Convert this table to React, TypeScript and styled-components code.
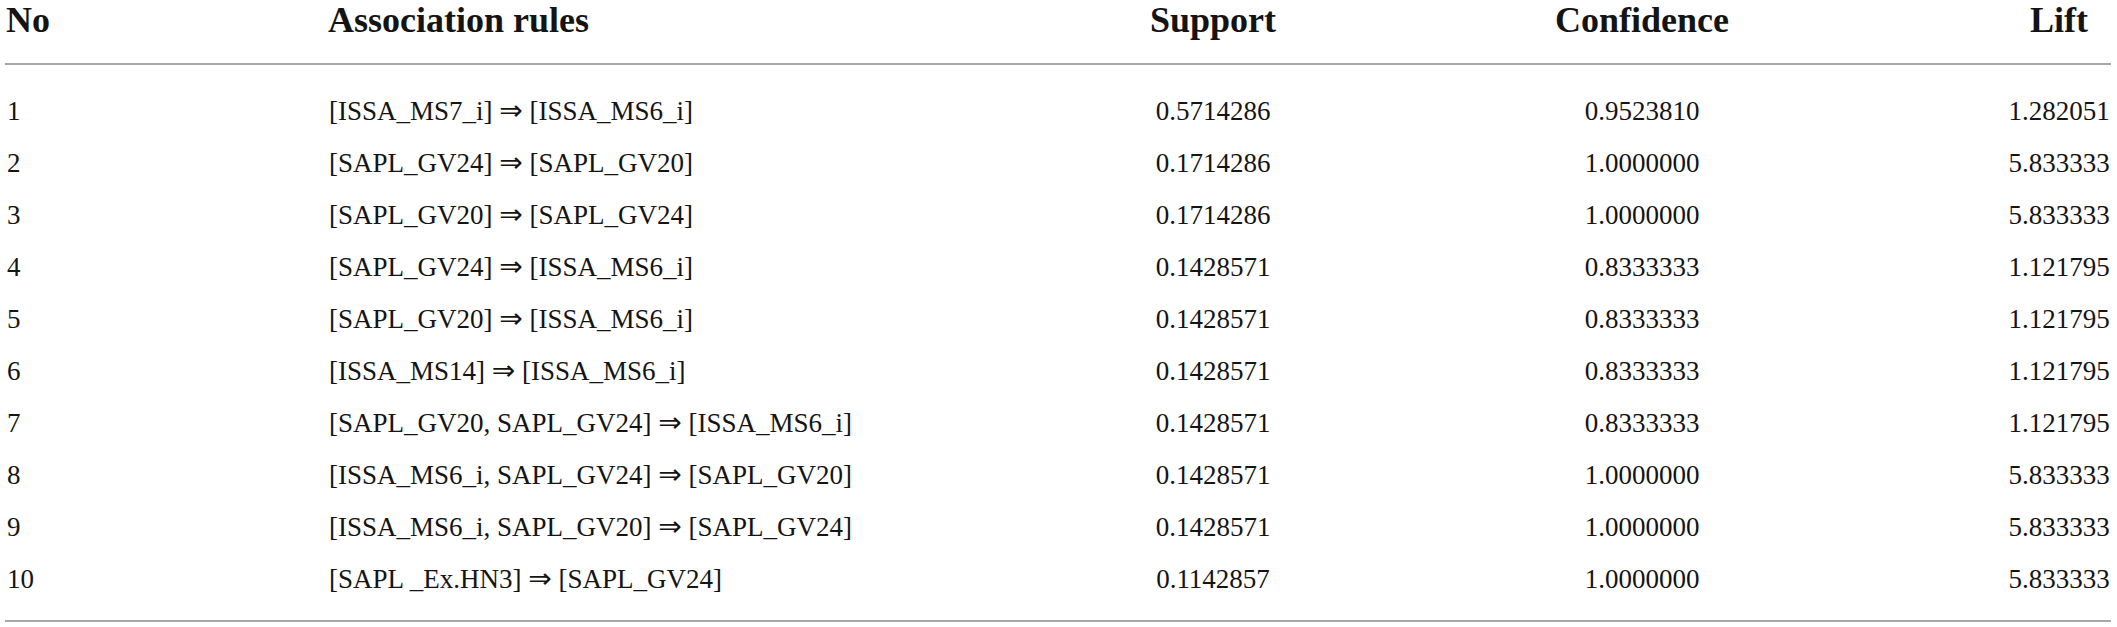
import React from "react";
import styled, { createGlobalStyle } from "styled-components";

const GlobalStyle = createGlobalStyle`
  html, body {
    margin: 0;
    padding: 0;
    background: #ffffff;
  }
  body {
    width: 2117px;
    height: 627px;
    overflow: hidden;
    font-family: "Liberation Serif", "Times New Roman", "DejaVu Serif", serif;
    color: #141414;
  }
`;

const Page = styled.div`
  padding: 0 6px 0 5px;
  width: 2117px;
  box-sizing: border-box;
`;

const Table = styled.div`
  display: grid;
  grid-template-columns: 322px 822px 128px 730px 104px;
`;

const Row = styled.div`
  display: contents;
`;

const HeadCell = styled.div<{ $align: "left" | "center" }>`
  padding: 2px 0 25px;
  font-size: 36px;
  line-height: 36px;
  font-weight: 700;
  white-space: nowrap;
  border-bottom: 2px solid #a8a8a8;
  display: flex;
  justify-content: ${(p) => (p.$align === "center" ? "center" : "flex-start")};
  padding-left: ${(p) => (p.$align === "left" ? "1px" : "0")};
`;

const Cell = styled.div<{ $align: "left" | "center"; $first?: boolean; $last?: boolean }>`
  font-size: 27px;
  line-height: 52px;
  white-space: pre;
  display: flex;
  align-items: baseline;
  justify-content: ${(p) => (p.$align === "center" ? "center" : "flex-start")};
  padding-left: ${(p) => (p.$align === "left" ? "2px" : "0")};
  padding-top: ${(p) => (p.$first ? "20px" : "0")};
  padding-bottom: ${(p) => (p.$last ? "15px" : "0")};
  border-bottom: ${(p) => (p.$last ? "2px solid #a8a8a8" : "none")};
`;

const Arrow = styled.span`
  font-family: "DejaVu Sans", sans-serif;
  font-size: 28px;
  line-height: 52px;
`;

type RuleRow = { no: number; lhs: string; rhs: string; support: string; confidence: string; lift: string };

const rows: RuleRow[] = [
  { no: 1, lhs: "[ISSA_MS7_i]", rhs: "[ISSA_MS6_i]", support: "0.5714286", confidence: "0.9523810", lift: "1.282051" },
  { no: 2, lhs: "[SAPL_GV24]", rhs: "[SAPL_GV20]", support: "0.1714286", confidence: "1.0000000", lift: "5.833333" },
  { no: 3, lhs: "[SAPL_GV20]", rhs: "[SAPL_GV24]", support: "0.1714286", confidence: "1.0000000", lift: "5.833333" },
  { no: 4, lhs: "[SAPL_GV24]", rhs: "[ISSA_MS6_i]", support: "0.1428571", confidence: "0.8333333", lift: "1.121795" },
  { no: 5, lhs: "[SAPL_GV20]", rhs: "[ISSA_MS6_i]", support: "0.1428571", confidence: "0.8333333", lift: "1.121795" },
  { no: 6, lhs: "[ISSA_MS14]", rhs: "[ISSA_MS6_i]", support: "0.1428571", confidence: "0.8333333", lift: "1.121795" },
  { no: 7, lhs: "[SAPL_GV20, SAPL_GV24]", rhs: "[ISSA_MS6_i]", support: "0.1428571", confidence: "0.8333333", lift: "1.121795" },
  { no: 8, lhs: "[ISSA_MS6_i, SAPL_GV24]", rhs: "[SAPL_GV20]", support: "0.1428571", confidence: "1.0000000", lift: "5.833333" },
  { no: 9, lhs: "[ISSA_MS6_i, SAPL_GV20]", rhs: "[SAPL_GV24]", support: "0.1428571", confidence: "1.0000000", lift: "5.833333" },
  { no: 10, lhs: "[SAPL _Ex.HN3]", rhs: "[SAPL_GV24]", support: "0.1142857", confidence: "1.0000000", lift: "5.833333" },
];

export default function App() {
  return (
    <>
      <GlobalStyle />
      <Page>
        <Table>
          <Row>
            <HeadCell $align="left">No</HeadCell>
            <HeadCell $align="left">Association rules</HeadCell>
            <HeadCell $align="center">Support</HeadCell>
            <HeadCell $align="center">Confidence</HeadCell>
            <HeadCell $align="center">Lift</HeadCell>
          </Row>
          {rows.map((r, i) => {
            const first = i === 0;
            const last = i === rows.length - 1;
            return (
              <Row key={r.no}>
                <Cell $align="left" $first={first} $last={last}>{r.no}</Cell>
                <Cell $align="left" $first={first} $last={last}>
                  {r.lhs + " "}<Arrow>⇒</Arrow>{" " + r.rhs}
                </Cell>
                <Cell $align="center" $first={first} $last={last}>{r.support}</Cell>
                <Cell $align="center" $first={first} $last={last}>{r.confidence}</Cell>
                <Cell $align="center" $first={first} $last={last}>{r.lift}</Cell>
              </Row>
            );
          })}
        </Table>
      </Page>
    </>
  );
}
